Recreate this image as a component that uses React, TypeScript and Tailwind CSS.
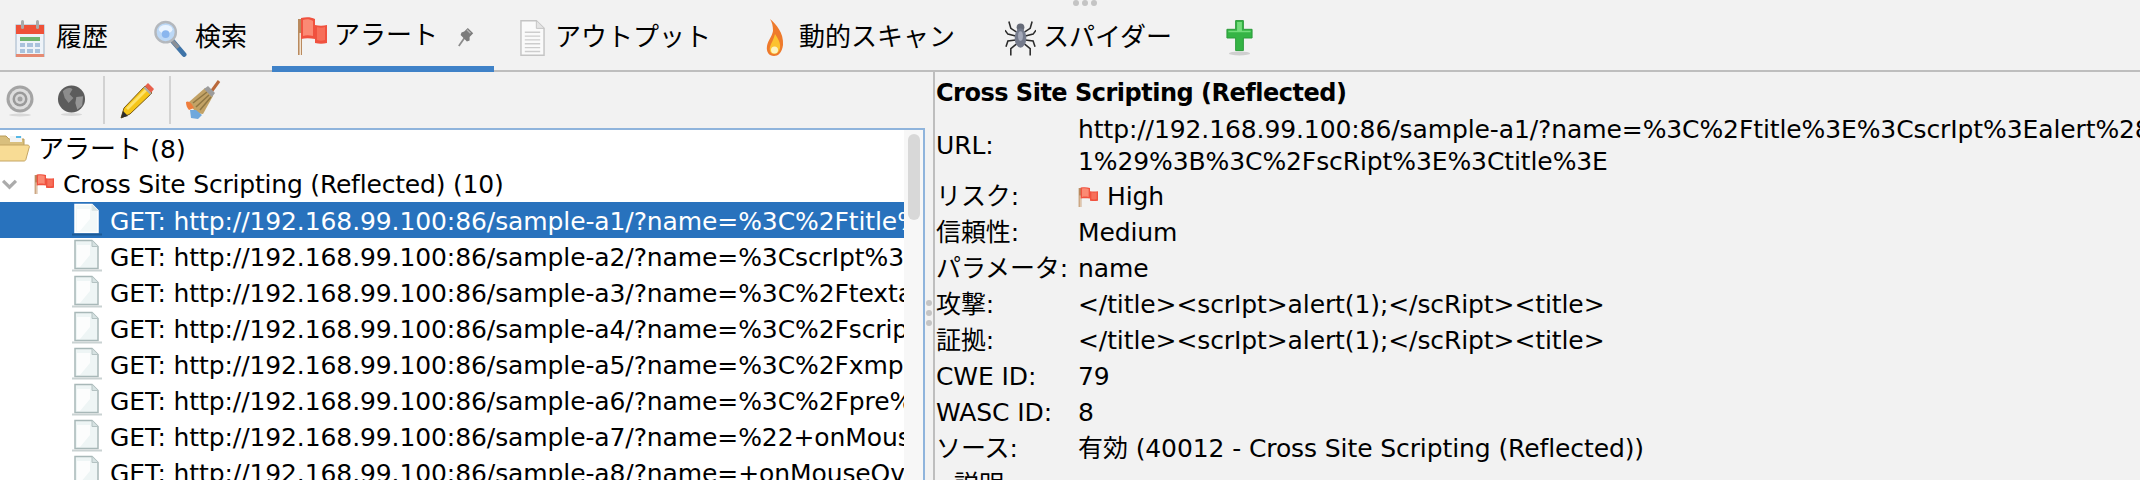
import React from 'react';

const UI_FONT = { fontFamily: '"DejaVu Sans", "Noto Sans CJK JP", sans-serif' };

const Flag = ({ className }: { className?: string }) => (
  <svg viewBox="0 0 30 38" preserveAspectRatio="none" className={className}>
    <rect x="1" y="2" width="4" height="36" fill="#b98a5e" />
    <rect x="2.5" y="16" width="1.5" height="22" fill="#f3e4d2" />
    <path d="M4 1 C9 0 14 0 18 2 L18 8 C22 9 26 9 30 8 L30 26 C26 27 22 27 18 26 L18 22 C13 21 8 21 4 22 Z" fill="#f0523f" />
    <path d="M6 3 C9 2 13 2 16 4 L16 19 C12 18 9 18 6 19 Z" fill="#fb8a74" />
    <path d="M20 10 C23 11 25 11 28 10 L28 23 C25 24 23 24 20 23 Z" fill="#f76f5a" />
  </svg>
);

const Calendar = () => (
  <svg viewBox="0 0 30 38" className="w-[30px] h-[38px]">
    <rect x="1" y="6" width="28" height="32" fill="#eef3f8" stroke="#9fb4c8" />
    <rect x="1" y="6" width="28" height="9" fill="#ef5138" />
    <rect x="6" y="1" width="3" height="9" rx="1.5" fill="#a9a9a9" />
    <rect x="21" y="1" width="3" height="9" rx="1.5" fill="#a9a9a9" />
    <rect x="5" y="18" width="20" height="4" fill="#6fb66e" />
    <path d="M5 24h5v4H5zM12 24h6v4h-6zM20 24h5v4h-5zM5 30h5v4H5zM12 30h6v4h-6zM20 30h5v4h-5z" fill="#a9c2dc" />
    <rect x="1" y="35" width="28" height="3" fill="#e58a72" />
  </svg>
);

const Magnifier = () => (
  <svg viewBox="0 0 34 38" className="w-[33px] h-[38px]">
    <path d="M19 22 L31 36" stroke="#3f74a8" strokeWidth="5" strokeLinecap="round" />
    <path d="M19 22 L25 29" stroke="#8a8f96" strokeWidth="4" />
    <circle cx="12" cy="13" r="10.5" fill="#bcd8f6" stroke="#b4b8bd" strokeWidth="2.5" />
    <ellipse cx="12" cy="10" rx="7" ry="4.5" fill="#eaf4ff" />
    <circle cx="12" cy="15" r="4" fill="#8ab6ee" />
  </svg>
);

const Pin = () => (
  <svg viewBox="0 0 20 24" className="w-[18px] h-[22px]">
    <path d="M2 23 L9 13" stroke="#8c8c8c" strokeWidth="2" />
    <path d="M8 7 L12 3 L18 9 L14 13 L14 17 L11 18 L4 11 L5 8 Z" fill="#7c7c7c" />
    <path d="M11 5 L15 9" stroke="#b5b5b5" strokeWidth="1.5" />
  </svg>
);

const TabDoc = () => (
  <svg viewBox="0 0 26 38" className="w-[25px] h-[38px]">
    <path d="M1 1 H17 L25 9 V37 H1 Z" fill="#fafafa" stroke="#c4c4c4" strokeWidth="1.5" />
    <path d="M17 1 V9 H25" fill="#e4e4e4" stroke="#c4c4c4" />
    <path d="M5 13H21M5 17H21M5 21H21M5 25H21M5 29H21M5 33H21" stroke="#cdcdcd" strokeWidth="1.4" />
  </svg>
);

const FlameIcon = () => (
  <svg viewBox="0 0 24 38" className="w-[24px] h-[38px]">
    <path d="M7 0 C13 5 21 14 20 26 C19 34 15 37 11 37 C6 37 3 33 4 27 C5 21 9 18 10 12 C10 7 9 3 7 0 Z" fill="#ee7a2c" />
    <path d="M12 15 C15 20 18 24 17 29 C16 33 14 35 11 35 C8 35 6 32 7 28 C8 24 11 20 12 15 Z" fill="#fcc22e" />
    <ellipse cx="11.5" cy="31" rx="3.5" ry="3.5" fill="#fdf3c0" />
  </svg>
);

const Spider = () => (
  <svg viewBox="0 0 32 38" className="w-[31px] h-[38px]">
    <g stroke="#2b2b2b" strokeWidth="1.6" fill="none">
      <path d="M12 13 L6 9 L4 2M20 13 L26 9 L28 2M11 17 L3 15 L0 11M21 17 L29 15 L32 11M11 21 L3 22 L1 28M21 21 L29 22 L31 28M12 25 L6 30 L6 37M20 25 L26 30 L26 37" />
    </g>
    <circle cx="16" cy="8" r="4" fill="#666b78" />
    <ellipse cx="16" cy="19" rx="6" ry="10" fill="#757b8c" />
    <ellipse cx="16" cy="17" rx="2.5" ry="5" fill="#a3a8b8" />
  </svg>
);

const Plus = () => (
  <svg viewBox="0 0 30 38" className="w-[29px] h-[38px]">
    <ellipse cx="15" cy="35" rx="11" ry="2" fill="#cfcfcf" />
    <path d="M11 1 H19 V10 H28 V19 H19 V32 H11 V19 H2 V10 H11 Z" fill="#35b445" stroke="#2b9a3a" />
    <path d="M12.5 2.5 H17.5 V11.5 H26.5 V13 H3.5 V11.5 H12.5 Z" fill="#74dd7c" />
  </svg>
);

const Target = () => (
  <svg viewBox="0 0 28 34" className="w-[28px] h-[34px]">
    <circle cx="14" cy="16" r="13.5" fill="#a4a4a4" />
    <circle cx="14" cy="16" r="10.5" fill="#dedede" />
    <circle cx="14" cy="16" r="7.5" fill="#9a9a9a" />
    <circle cx="14" cy="16" r="5" fill="#d8d8d8" />
    <circle cx="14" cy="16" r="2.5" fill="#a2a2a2" />
    <ellipse cx="14" cy="32" rx="11" ry="1.5" fill="#d8d8d8" />
  </svg>
);

const Globe = () => (
  <svg viewBox="0 0 30 34" className="w-[29px] h-[34px]">
    <circle cx="15" cy="16" r="14" fill="#5c5c5c" />
    <path d="M6 8 C10 4 14 4 16 6 L13 11 L17 15 L12 20 L8 15 Z" fill="#8c8c8c" />
    <path d="M20 14 L27 13 L26 23 L21 27 L19 20 Z" fill="#969696" />
    <ellipse cx="15" cy="32" rx="11" ry="1.5" fill="#d8d8d8" />
  </svg>
);

const Pencil = () => (
  <svg viewBox="0 0 34 38" className="w-[34px] h-[38px]">
    <path d="M1 37 L4 27 L25 5 L32 12 L10 33 Z" fill="#f5c518" stroke="#7a5a12" strokeWidth="1" />
    <path d="M6 27 L26 7 L28 9 L8 29 Z" fill="#fde26a" />
    <path d="M25 5 L28 2 L34 8 L31 12 Z" fill="#e8604c" />
    <path d="M24 6 L31 13" stroke="#a9a9a9" strokeWidth="2" />
    <path d="M1 37 L3 30 L8 35 Z" fill="#2d2d2d" />
  </svg>
);

const Broom = () => (
  <svg viewBox="0 0 36 40" className="w-[36px] h-[40px]">
    <path d="M26 12 L34 1" stroke="#b9683a" strokeWidth="3" />
    <path d="M4 22 L20 8 L28 16 L18 34 C13 34 7 30 4 22 Z" fill="#c2a266" />
    <path d="M8 23 L22 12M11 27 L24 15M15 30 L26 17" stroke="#8f7643" strokeWidth="1.5" />
    <path d="M19 9 L23 6 L30 13 L27 17 Z" fill="#9c9c9c" />
    <path d="M1 22 C4 20 7 24 9 28 L4 30 C2 28 1 25 1 22 Z" fill="#ef7d3c" />
    <path d="M5 30 L11 30 L17 35 L13 39 L6 38 Z" fill="#6fa8dc" />
  </svg>
);

const FolderOpen = () => (
  <svg viewBox="0 0 38 28" className="w-[38px] h-[28px] -ml-2 shrink-0">
    <path d="M2 6 C2 3 3 2 5 2 H14 L17 5 H32 V12 H2 Z" fill="#d9bf7d" stroke="#b99c5b" />
    <rect x="18" y="2" width="12" height="6" fill="#f3f3f3" />
    <rect x="24" y="2" width="5" height="2" fill="#55b8e6" />
    <path d="M1 26 L1 14 C1 12 2 11 4 11 H35 C37 11 38 12 37 14 L34 25 C34 26 33 27 32 27 H3 C2 27 1 27 1 26 Z" fill="#f8dc95" stroke="#c5a665" />
  </svg>
);

const RowDoc = ({ selected }: { selected?: boolean }) => (
  <svg viewBox="0 0 30 34" className="w-[30px] h-[34px] shrink-0">
    <path
      d="M3 1.5 H20 L26 7.5 V29.5 H3 Z"
      fill={selected ? '#f2f8f8' : '#eef5f5'}
      stroke={selected ? '#ffffff' : '#a8b8b8'}
      strokeWidth="1.5"
    />
    <path d="M20 1.5 V7.5 H26" fill="#d6e2e2" stroke={selected ? '#dfe8e8' : '#b4c2c2'} />
    <path d="M5 6 H18 V16 L8 28 H5 Z" fill="#ffffff" opacity="0.8" />
    <rect x="0" y="30.5" width="30" height="2" fill={selected ? '#1c5a96' : '#c9d2d2'} />
  </svg>
);

const requests = [
  'sample-a1/?name=%3C%2Ftitle%3E%3CscrIpt%3Ealert',
  'sample-a2/?name=%3CscrIpt%3Ealert%281%29%3B',
  'sample-a3/?name=%3C%2Ftextarea%3E%3CscrIpt',
  'sample-a4/?name=%3C%2Fscript%3E%3CscrIpt',
  'sample-a5/?name=%3C%2Fxmp%3E%3CscrIpt',
  'sample-a6/?name=%3C%2Fpre%3E%3CscrIpt',
  'sample-a7/?name=%22+onMouseOver%3D%22alert',
  'sample-a8/?name=+onMouseOver%3Dalert%281%29',
];

const details: { label: string; value: React.ReactNode }[] = [
  { label: 'リスク:', value: <span className="flex items-center gap-[9px]"><Flag className="w-[20px] h-[20px]" />High</span> },
  { label: '信頼性:', value: 'Medium' },
  { label: 'パラメータ:', value: 'name' },
  { label: '攻撃:', value: '</title><scrIpt>alert(1);</scRipt><title>' },
  { label: '証拠:', value: '</title><scrIpt>alert(1);</scRipt><title>' },
  { label: 'CWE ID:', value: '79' },
  { label: 'WASC ID:', value: '8' },
  { label: 'ソース:', value: '有効 (40012 - Cross Site Scripting (Reflected))' },
];

export default function App() {
  return (
    <div
      className="relative w-[2140px] h-[480px] overflow-hidden bg-[#f2f2f2] text-black text-[25px] tracking-[-0.1px]"
      style={UI_FONT}
    >
      {/* drag handle */}
      <div className="absolute top-[0px] left-[1073px] flex gap-[3px]">
        <span className="w-[6px] h-[6px] rounded-full bg-[#c4c4c4]" />
        <span className="w-[6px] h-[6px] rounded-full bg-[#c4c4c4]" />
        <span className="w-[6px] h-[6px] rounded-full bg-[#c4c4c4]" />
      </div>

      {/* tab strip */}
      <div className="h-[72px] flex items-stretch border-b-2 border-[#bebebe] text-[26px] tracking-normal">
        <div className="flex items-center pt-[5px] ml-[15px] mr-[46px] gap-[11px]">
          <Calendar />
          <span>履歴</span>
        </div>
        <div className="flex items-center pt-[5px] mr-[25px] gap-[8px]">
          <Magnifier />
          <span>検索</span>
        </div>
        <div className="flex items-center pt-[5px] pl-[25px] w-[222px] h-[72px] gap-[7px] border-b-[6px] border-[#3f82c8]">
          <Flag className="w-[30px] h-[38px] shrink-0" />
          <span className="whitespace-nowrap">アラート</span>
          <span className="ml-[12px]"><Pin /></span>
        </div>
        <div className="flex items-center pt-[5px] ml-[26px] gap-[10px]">
          <TabDoc />
          <span>アウトプット</span>
        </div>
        <div className="flex items-center pt-[5px] ml-[52px] gap-[12px]">
          <FlameIcon />
          <span>動的スキャン</span>
        </div>
        <div className="flex items-center pt-[5px] ml-[50px] gap-[7px]">
          <Spider />
          <span>スパイダー</span>
        </div>
        <div className="flex items-center pt-[5px] ml-[53px]">
          <Plus />
        </div>
      </div>

      <div className="flex h-[408px]">
        {/* left pane */}
        <div className="w-[933px] shrink-0 flex flex-col">
          <div className="h-[56px] flex items-center pl-[6px] shrink-0">
            <Target />
            <span className="ml-[23px]"><Globe /></span>
            <span className="ml-[17px] w-[2px] h-[48px] bg-[#d2d2d2]" />
            <span className="ml-[15px]"><Pencil /></span>
            <span className="ml-[15px] w-[2px] h-[48px] bg-[#d2d2d2]" />
            <span className="ml-[14px]"><Broom /></span>
          </div>
          <div className="w-[925px] flex-1 bg-white border-t-2 border-r-2 border-[#8fb4dc] flex min-h-0">
            <div className="w-[904px] shrink-0 overflow-hidden">
              <div className="h-[36px] flex items-center gap-[8px]">
                <FolderOpen />
                <span className="text-[26px] tracking-normal pt-[2px] whitespace-nowrap">アラート <span className="text-[25px]">(8)</span></span>
              </div>
              <div className="h-[36px] flex items-center">
                <svg viewBox="0 0 18 12" className="w-[17px] h-[11px] ml-[1px] shrink-0">
                  <path d="M2 2 L9 9 L16 2" fill="none" stroke="#ababab" strokeWidth="3.5" />
                </svg>
                <Flag className="w-[20px] h-[20px] ml-[16px] shrink-0" />
                <span className="ml-[9px] pt-[2px] whitespace-nowrap tracking-[-0.2px]">Cross Site Scripting (Reflected) (10)</span>
              </div>
              {requests.map((r, i) => (
                <div
                  key={r}
                  className={`h-[36px] flex items-center pl-[72px] gap-[8px] whitespace-nowrap ${i === 0 ? 'bg-[#2872bd] text-white' : ''}`}
                >
                  <RowDoc selected={i === 0} />
                  <span className="pt-[3px]">GET: http://192.168.99.100:86/{r}</span>
                </div>
              ))}
            </div>
            <div className="flex-1 bg-[#f7f7f7] pt-[4px] flex justify-center">
              <div className="w-[12px] h-[86px] rounded-full bg-[#d8d8d8]" />
            </div>
          </div>
        </div>

        {/* right pane */}
        <div className="flex-1 min-w-0 border-l-2 border-[#bebebe] pl-[1px] overflow-hidden">
          <div className="h-[41px] flex items-center font-bold text-[24px] tracking-[-0.5px] whitespace-nowrap">
            Cross Site Scripting (Reflected)
          </div>
          <div className="h-[66px] flex items-center">
            <div className="w-[142px] shrink-0">URL:</div>
            <div className="leading-[32px] whitespace-nowrap">
              <div>http://192.168.99.100:86/sample-a1/?name=%3C%2Ftitle%3E%3CscrIpt%3Ealert%28</div>
              <div>1%29%3B%3C%2FscRipt%3E%3Ctitle%3E</div>
            </div>
          </div>
          {details.map(d => (
            <div key={d.label} className="h-[36px] flex items-center whitespace-nowrap">
              <div className="w-[142px] shrink-0">{d.label}</div>
              <div>{d.value}</div>
            </div>
          ))}
          <div className="h-[36px] pl-[18px] flex items-center">説明:</div>
        </div>
      </div>

      {/* splitter grip */}
      <div className="absolute left-[926px] top-[300px] flex flex-col gap-[4px]">
        <span className="w-[6px] h-[6px] rounded-full bg-[#c4c4c4]" />
        <span className="w-[6px] h-[6px] rounded-full bg-[#c4c4c4]" />
        <span className="w-[6px] h-[6px] rounded-full bg-[#c4c4c4]" />
      </div>
    </div>
  );
}
